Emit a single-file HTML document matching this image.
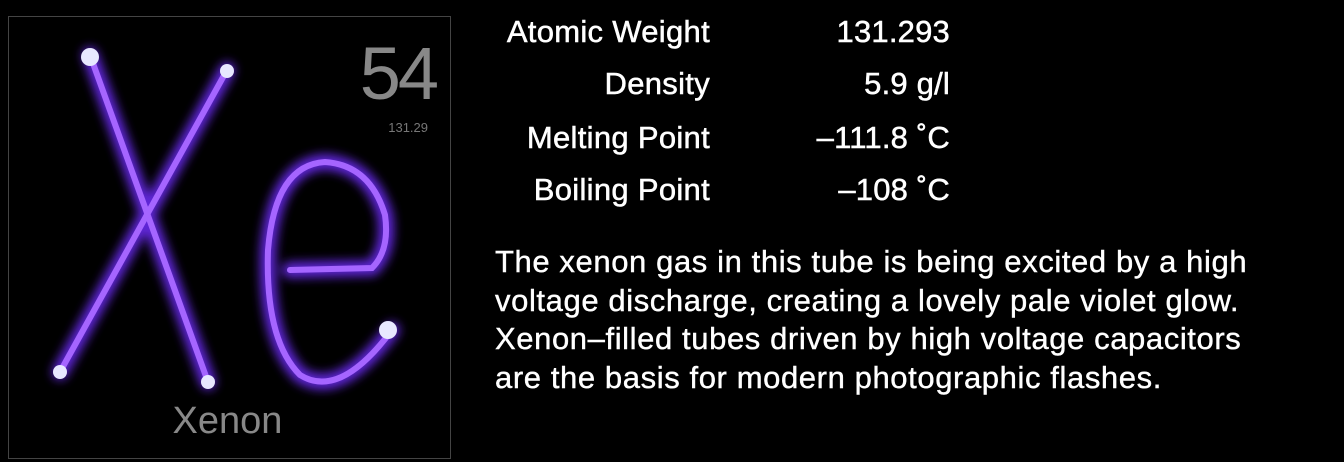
<!DOCTYPE html>
<html><head><meta charset="utf-8"><style>
html,body{margin:0;padding:0;background:#000;width:1344px;height:462px;overflow:hidden}
body{position:relative;font-family:"Liberation Sans",Arial,sans-serif;color:#fff}
.box{position:absolute;left:8px;top:16px;width:443px;height:443px;border:1px solid #444;box-sizing:border-box}
.num{position:absolute;left:330px;top:38px;width:106px;text-align:right;font-size:74px;color:#888;letter-spacing:-3px;line-height:72px}
.w{position:absolute;left:340px;top:120px;width:88px;text-align:right;font-size:13px;color:#777}
.name{position:absolute;left:0;top:400px;width:455px;text-align:center;font-size:38px;color:#888;padding-left:0}
.lab{position:absolute;right:634px;font-size:31px;letter-spacing:0.3px;text-align:right;white-space:nowrap;-webkit-text-stroke:0.5px #fff;line-height:34px}
.val{position:absolute;right:394px;font-size:31px;letter-spacing:0.2px;text-align:right;white-space:nowrap;-webkit-text-stroke:0.5px #fff;line-height:34px}
.p{position:absolute;left:495px;top:243px;font-size:31px;line-height:38.5px;letter-spacing:0.6px;white-space:nowrap;-webkit-text-stroke:0.4px #fff}
</style></head><body>
<div class="box"></div>
<svg width="460" height="462" style="position:absolute;left:0;top:0">
<defs><filter id="g" x="-20%" y="-20%" width="140%" height="140%"><feGaussianBlur stdDeviation="5"/></filter></defs>
<g stroke="#6a2cf0" stroke-width="16" fill="none" stroke-linecap="round" filter="url(#g)" opacity="0.9">
<path d="M90 55 L208 382"/><path d="M227 70 L60 372"/>
<path d="M290 270 L372 268 Q390 250 385 215 Q370 165 325 162 Q275 165 268 250 Q265 340 300 375 Q340 400 392 330"/>
</g>
<g stroke="#a565ff" stroke-width="6" fill="none" stroke-linecap="round">
<path d="M90 55 L208 382"/><path d="M227 70 L60 372"/>
<path d="M290 270 L372 268 Q390 250 385 215 Q370 165 325 162 Q275 165 268 250 Q265 340 300 375 Q340 400 392 330"/>
</g>
<g fill="#e8e8ff"><circle cx="90" cy="57" r="9"/><circle cx="227" cy="71" r="7"/><circle cx="60" cy="372" r="7"/><circle cx="208" cy="382" r="7"/><circle cx="388" cy="330" r="9"/></g>
</svg>
<div class="num">54</div>
<div class="w">131.29</div>
<div class="name">Xenon</div>
<div class="lab" style="top:15px">Atomic Weight</div>
<div class="lab" style="top:67px">Density</div>
<div class="lab" style="top:121px">Melting Point</div>
<div class="lab" style="top:173px">Boiling Point</div>
<div class="val" style="top:15px">131.293</div>
<div class="val" style="top:67px">5.9 g/l</div>
<div class="val" style="top:121px">–111.8 ˚C</div>
<div class="val" style="top:173px">–108 ˚C</div>
<div class="p">The xenon gas in this tube is being excited by a high<br>voltage discharge, creating a lovely pale violet glow.<br>Xenon–filled tubes driven by high voltage capacitors<br>are the basis for modern photographic flashes.</div>
</body></html>
